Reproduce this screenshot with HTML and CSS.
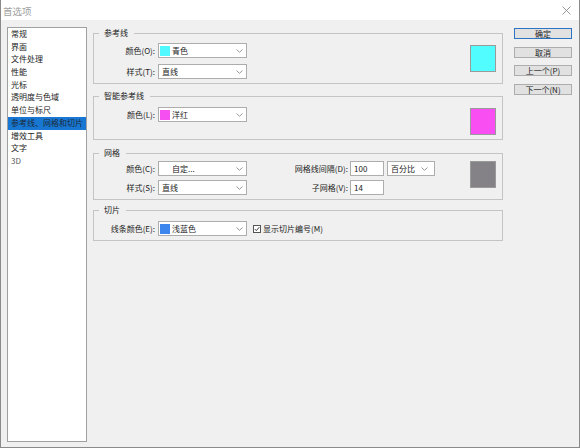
FILE: index.html
```html
<!DOCTYPE html>
<html lang="zh-CN">
<head>
<meta charset="utf-8">
<title>首选项</title>
<link rel="stylesheet" href="styles.css">
</head>
<body>
<div class="window">
  <div class="titlebar">
    <span class="title">首选项</span>
    <svg class="close" width="9" height="9" viewBox="0 0 9 9"><path d="M0.5 0.5L8.5 8.5M8.5 0.5L0.5 8.5" stroke="#8a8a8a" stroke-width="0.9" fill="none"/></svg>
  </div>
  <div class="content">
    <ul class="nav">
      <li>常规</li>
      <li>界面</li>
      <li>文件处理</li>
      <li>性能</li>
      <li>光标</li>
      <li>透明度与色域</li>
      <li>单位与标尺</li>
      <li class="active">参考线、网格和切片</li>
      <li>增效工具</li>
      <li>文字</li>
      <li class="dim">3D</li>
    </ul>

    <div class="panels">
      <fieldset class="group g1">
        <legend>参考线</legend>
        <div class="group-inner">
          <div class="rows">
            <div class="row">
              <span class="lbl">颜色(O):</span>
              <div class="select w89"><span class="chip chip-cyan"></span><span class="val">青色</span><svg class="chev" width="7" height="4" viewBox="0 0 7 4"><path d="M0.5 0.5L3.5 3.3L6.5 0.5" stroke="#8c8c8c" stroke-width="0.9" fill="none"/></svg></div>
            </div>
            <div class="row gap6">
              <span class="lbl">样式(T):</span>
              <div class="select w89 plain"><span class="val">直线</span><svg class="chev" width="7" height="4" viewBox="0 0 7 4"><path d="M0.5 0.5L3.5 3.3L6.5 0.5" stroke="#8c8c8c" stroke-width="0.9" fill="none"/></svg></div>
            </div>
          </div>
          <div class="swatch sw-cyan mt2"></div>
        </div>
      </fieldset>

      <fieldset class="group g2">
        <legend>智能参考线</legend>
        <div class="group-inner">
          <div class="rows">
            <div class="row">
              <span class="lbl">颜色(L):</span>
              <div class="select w89"><span class="chip chip-magenta"></span><span class="val">洋红</span><svg class="chev" width="7" height="4" viewBox="0 0 7 4"><path d="M0.5 0.5L3.5 3.3L6.5 0.5" stroke="#8c8c8c" stroke-width="0.9" fill="none"/></svg></div>
            </div>
          </div>
          <div class="swatch sw-magenta mt1"></div>
        </div>
      </fieldset>

      <fieldset class="group g3">
        <legend>网格</legend>
        <div class="group-inner">
          <div class="rows">
            <div class="row">
              <span class="lbl">颜色(C):</span>
              <div class="select w89 custom"><span class="val">自定...</span><svg class="chev" width="7" height="4" viewBox="0 0 7 4"><path d="M0.5 0.5L3.5 3.3L6.5 0.5" stroke="#8c8c8c" stroke-width="0.9" fill="none"/></svg></div>
              <span class="lbl lbl2">网格线间隔(D):</span>
              <div class="input">100</div>
              <div class="select w48 plain"><span class="val">百分比</span><svg class="chev chev-r" width="7" height="4" viewBox="0 0 7 4"><path d="M0.5 0.5L3.5 3.3L6.5 0.5" stroke="#8c8c8c" stroke-width="0.9" fill="none"/></svg></div>
            </div>
            <div class="row gap4">
              <span class="lbl">样式(S):</span>
              <div class="select w89 plain"><span class="val">直线</span><svg class="chev" width="7" height="4" viewBox="0 0 7 4"><path d="M0.5 0.5L3.5 3.3L6.5 0.5" stroke="#8c8c8c" stroke-width="0.9" fill="none"/></svg></div>
              <span class="lbl lbl2">子网格(V):</span>
              <div class="input">14</div>
            </div>
          </div>
          <div class="swatch sw-gray"></div>
        </div>
      </fieldset>

      <fieldset class="group g4">
        <legend>切片</legend>
        <div class="group-inner">
          <div class="rows">
            <div class="row">
              <span class="lbl">线条颜色(E):</span>
              <div class="select w89"><span class="chip chip-blue"></span><span class="val">浅蓝色</span><svg class="chev" width="7" height="4" viewBox="0 0 7 4"><path d="M0.5 0.5L3.5 3.3L6.5 0.5" stroke="#8c8c8c" stroke-width="0.9" fill="none"/></svg></div>
              <span class="check"><svg width="8" height="8" viewBox="0 0 8 8"><rect x="0.5" y="0.5" width="7" height="7" fill="#fff" stroke="#555" stroke-width="1"/><path d="M1.8 4.1L3.3 5.6L6.3 2.2" stroke="#222" stroke-width="0.9" fill="none"/></svg></span>
              <span class="check-lbl">显示切片编号(M)</span>
            </div>
          </div>
        </div>
      </fieldset>
    </div>

    <div class="buttons">
      <div class="btn primary">确定</div>
      <div class="btn">取消</div>
      <div class="btn">上一个(P)</div>
      <div class="btn">下一个(N)</div>
    </div>
  </div>
</div>
</body>
</html>
```

FILE: styles.css
```css
* { box-sizing: border-box; }
html, body { margin: 0; padding: 0; }
body {
  font-family: "Noto Sans CJK SC", "Liberation Sans", sans-serif;
  font-size: 8px;
  color: #222;
  background: #f0f0f0;
}
.window {
  width: 580px;
  height: 448px;
  border: 1px solid #8a8a8a;
  border-top: none;
  background: #f0f0f0;
  display: flex;
  flex-direction: column;
}
.titlebar {
  height: 20px;
  background: #ffffff;
  display: flex;
  align-items: center;
  justify-content: space-between;
  padding: 1px 8px 0 2px;
}
.title {
  font-size: 9.5px;
  color: #a0a0a0;
  line-height: 12px;
}
.close { display: block; }
.content {
  flex: 1;
  display: flex;
  align-items: stretch;
  padding: 7px 7px 5px 6px;
}
.nav {
  list-style: none;
  margin: 0;
  padding: 0;
  width: 80px;
  background: #fff;
  border: 1px solid #a0a0a0;
}
.nav li {
  line-height: 12.7px;
  height: 12.7px;
  padding-left: 3px;
  white-space: nowrap;
  color: #222;
}
.nav li.active {
  background: #1777d2;
  color: #1c2a3a;
}
.nav li.dim { color: #555; }

.panels {
  width: 410px;
  margin-left: 6px;
  display: flex;
  flex-direction: column;
}
.group {
  margin: 0;
  border: 1px solid #c4c4c4;
  min-width: 0;
}
.group legend {
  margin-left: 5px;
  padding: 0 6px 0 5px;
  line-height: 12px;
  font-size: 8px;
  color: #222;
}
.g1 { padding: 4px 6px 4px 0; }
.g2 { padding: 5px 6px 4px 0; margin-top: 6px; }
.g3 { padding: 2px 6px 4px 0; margin-top: 7px; }
.g4 { padding: 5px 6px 4px 0; margin-top: 4px; }

.group-inner {
  display: flex;
  justify-content: space-between;
  align-items: flex-start;
}
.rows { display: flex; flex-direction: column; }
.row {
  display: flex;
  align-items: center;
  height: 15px;
}
.gap6 { margin-top: 6px; }
.gap4 { margin-top: 4px; }
.lbl {
  width: 61px;
  text-align: right;
  margin-right: 3px;
  line-height: 15px;
  white-space: nowrap;
}
.lbl2 {
  width: 101px;
  margin-right: 2px;
}
.select {
  height: 15px;
  background: #fff;
  border: 1px solid #adadad;
  display: flex;
  align-items: center;
  padding-left: 1px;
  line-height: 13px;
}
.select.plain { padding-left: 3px; }
.select.custom { padding-left: 13px; }
.w89 { width: 89px; }
.w48 { width: 48px; margin-left: 3px; }
.chip {
  width: 10px;
  height: 10px;
  margin-right: 2px;
  flex: none;
}
.chip-cyan { background: #4ff9ff; }
.chip-magenta { background: #f54ff2; }
.chip-blue { background: #3d86ee; }
.val { white-space: nowrap; }
.chev {
  display: block;
  margin-left: auto;
  margin-right: 3px;
}
.chev-r { margin-right: 6px; }
.input {
  width: 34px;
  height: 15px;
  background: #fff;
  border: 1px solid #adadad;
  padding-left: 3px;
  line-height: 13px;
}
.swatch {
  width: 26px;
  height: 27px;
  border: 1px solid #9a9a9a;
  flex: none;
}
.mt1 { margin-top: 1px; }
.mt2 { margin-top: 2px; }
.sw-cyan { background: #52fdff; }
.sw-magenta { background: #f94ff2; }
.sw-gray { background: #848286; }
.check {
  margin-left: 6px;
  width: 8px;
  height: 8px;
  display: block;
}
.check svg { display: block; }
.check-lbl {
  margin-left: 2px;
  line-height: 15px;
  white-space: nowrap;
}

.buttons {
  width: 58px;
  margin-left: 11px;
  padding-top: 1px;
  display: flex;
  flex-direction: column;
}
.btn {
  height: 11px;
  line-height: 9px;
  font-size: 8px;
  text-align: center;
  background: #e1e1e1;
  border: 1px solid #adadad;
  color: #222;
  margin-bottom: 7.5px;
  white-space: nowrap;
}
.btn.primary {
  border-color: #2d75c2;
}
```
